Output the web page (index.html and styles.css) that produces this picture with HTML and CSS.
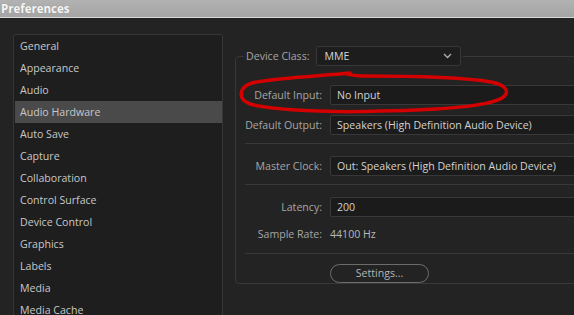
FILE: index.html
```html
<!DOCTYPE html>
<html lang="en">
<head>
    <meta charset="UTF-8">
    <meta name="viewport" content="width=device-width, initial-scale=1.0">
    <title>Preferences</title>
    <link rel="stylesheet" href="styles.css">
</head>
<body>
    <div class="titlebar">Preferences</div>

    <div class="window">
        <ul class="categories">
            <li>General</li>
            <li>Appearance</li>
            <li>Audio</li>
            <li class="selected">Audio Hardware</li>
            <li>Auto Save</li>
            <li>Capture</li>
            <li>Collaboration</li>
            <li>Control Surface</li>
            <li>Device Control</li>
            <li>Graphics</li>
            <li>Labels</li>
            <li>Media</li>
            <li>Media Cache</li>
        </ul>

        <fieldset class="audio-group">
            <legend>
                <span class="legend-label">Device Class:</span>
                <span class="select">
                    MME
                    <svg width="9" height="6" viewBox="0 0 9 6"><polyline points="1,1 4.5,4.5 8,1" fill="none" stroke="#b0b0b0" stroke-width="1.3"/></svg>
                </span>
            </legend>

            <div class="row">
                <span class="label">Default Input:</span>
                <span class="field">No Input</span>
            </div>
            <div class="row">
                <span class="label">Default Output:</span>
                <span class="field">Speakers (High Definition Audio Device)</span>
            </div>

            <div class="divider"></div>

            <div class="row">
                <span class="label">Master Clock:</span>
                <span class="field">Out: Speakers (High Definition Audio Device)</span>
            </div>

            <div class="divider"></div>

            <div class="row">
                <span class="label">Latency:</span>
                <span class="field">200</span>
            </div>
            <div class="row plain">
                <span class="label">Sample Rate:</span>
                <span class="value">44100 Hz</span>
            </div>

            <div class="divider tight"></div>

            <div class="row">
                <span class="label"></span>
                <button class="settings-btn">Settings...</button>
            </div>
        </fieldset>
    </div>

    <!-- red marker circle drawn over the screenshot -->
    <svg class="annotation" width="574" height="315" viewBox="0 0 574 315">
        <path d="M350 73 C320 76 272 78 252 83 C239 87 237 99 250 104 C272 110 330 113 380 111 C440 110 488 106 502 98 C511 92 506 85 491 82 C462 77 410 76 362 76 C356 76 352 75 347 74"
              fill="none" stroke="#d40000" stroke-width="3.5" stroke-linecap="round"/>
    </svg>
</body>
</html>
```

FILE: styles.css
```css
* {
    box-sizing: border-box;
}
body {
    margin: 0;
    height: 315px;
    overflow: hidden;
    background-color: #232323;
    font-family: "Open Sans", "Noto Sans", sans-serif;
    font-size: 10.6px;
    color: #c8c8c8;
}
.titlebar {
    height: 18px;
    padding-left: 1px;
    background: linear-gradient(#b2b2b2, #a4a4a4);
    border-bottom: 1px solid #d8d8d8;
    color: #f6f6f6;
    font-weight: bold;
    font-size: 11.5px;
    line-height: 17px;
    text-shadow: 0 0 1px #8a8a8a;
}
.window {
    display: flex;
    align-items: flex-start;
    padding-left: 13px;
}
.categories {
    flex-shrink: 0;
    list-style: none;
    width: 210px;
    margin: 16px 0 0;
    padding: 0 0 0 1px;
    border: 1px solid #363636;
    border-radius: 3px;
    background-color: #1e1e1e;
}
.categories li {
    height: 22px;
    line-height: 22px;
    padding-left: 5px;
    white-space: nowrap;
}
.categories li.selected {
    background-color: #4a4a4a;
}
.audio-group {
    flex-shrink: 0;
    width: 420px;
    min-width: 0;
    margin: 28px 0 0 12px;
    padding: 19px 0 0 10px;
    border: 1px solid #383838;
    border-radius: 4px;
}
.audio-group legend {
    display: flex;
    align-items: center;
    gap: 6px;
    height: 20px;
    margin-left: -2px;
    padding: 0 2px;
}
.legend-label,
.label {
    color: #a6a6a6;
    white-space: nowrap;
}
.select {
    display: flex;
    align-items: center;
    justify-content: space-between;
    width: 145px;
    height: 20px;
    padding: 0 8px 0 8px;
    border: 1px solid #383838;
    border-radius: 3px;
    background-color: #1d1d1d;
    color: #d4d4d4;
}
.row {
    display: flex;
    align-items: center;
    height: 20px;
}
.row + .row {
    margin-top: 10px;
}
.row.plain {
    height: 18px;
    margin-top: 8px;
}
.label {
    display: flex;
    justify-content: flex-end;
    flex-shrink: 0;
    width: 76px;
    margin-right: 8px;
}
.field {
    flex: 1;
    height: 20px;
    padding-left: 6px;
    border: 1px solid #383838;
    border-radius: 2px;
    background-color: #1b1b1b;
    color: #d2d2d2;
    line-height: 18px;
    white-space: nowrap;
}
.value {
    color: #b8b8b8;
}
.divider {
    height: 1px;
    margin: 8px 0 12px -1px;
    background-color: #383838;
}
.divider.tight {
    margin: 10px 0 9px -1px;
}
.settings-btn {
    width: 99px;
    height: 19px;
    padding: 0;
    border: 1px solid #6c6c6c;
    border-radius: 10px;
    background: transparent;
    color: #b4b4b4;
    font-family: inherit;
    font-size: 10.6px;
}
.annotation {
    position: absolute;
    top: 0;
    left: 0;
    pointer-events: none;
}
```
